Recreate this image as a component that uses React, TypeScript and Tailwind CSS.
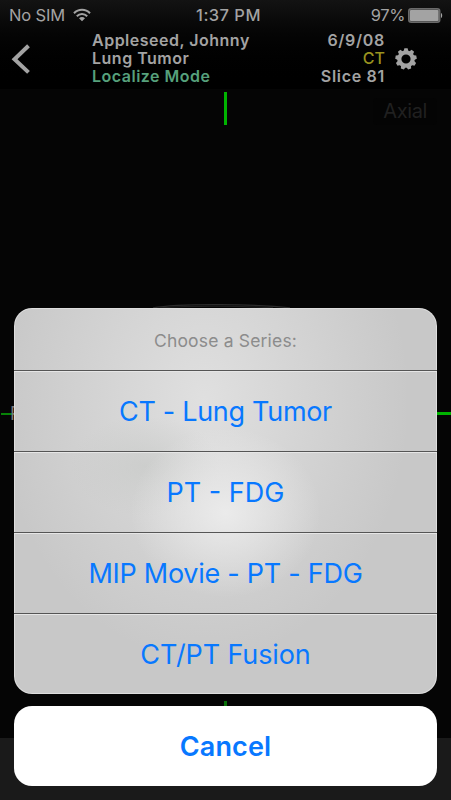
import { cva } from "class-variance-authority";

const SERIES = [
    { label: "CT - Lung Tumor", className: "tracking-[-0.3px]" },
    { label: "PT - FDG", className: "tracking-[0px]" },
    { label: "MIP Movie - PT - FDG", className: "tracking-[-0.26px]" },
    { label: "CT/PT Fusion", className: "tracking-[-0.12px]" },
];

const TEETH = [0, 40, 80, 120, 160, 200, 240, 280, 320];

const sheetButton = cva("flex w-full items-center justify-center text-[#0878ff]", {
    variants: {
        kind: {
            option: "h-[81px] border-t border-[#555] pt-[2px] text-[27px] shadow-[inset_0_1px_0_#e6e6e6]",
            cancel: "h-20 rounded-[18px] bg-white pt-[2px] text-[27px] font-semibold tracking-[0.1px]",
        },
    },
});

function WifiIcon() {
    return (
        <svg className="h-[14px] w-[18px]" viewBox="0 0 18 14" fill="none" stroke="#a3a3a3" strokeWidth="2">
            <path d="M1 5.2C5.4.6 12.6.6 17 5.2" />
            <path d="M3.8 8.2c2.9-3 7.5-3 10.4 0" />
            <path d="M9 13.2 6 10.2c1.7-1.6 4.3-1.6 6 0Z" fill="#a3a3a3" stroke="none" />
        </svg>
    );
}

function BatteryIcon() {
    return (
        <svg className="h-[15px] w-[35px]" viewBox="0 0 35 15">
            <rect x="0.75" y="0.75" width="31" height="13.5" rx="2.5" fill="#444" stroke="#6a6a6a" strokeWidth="1.5" />
            <rect x="2" y="2" width="28.5" height="11" rx="1" fill="#a3a3a3" />
            <path d="M33 5c1.6.5 1.6 4.5 0 5Z" fill="#a6a6a6" />
        </svg>
    );
}

function GearIcon() {
    return (
        <svg className="h-[22px] w-[22px]" viewBox="-11 -11 22 22">
            <circle r="6.7" fill="none" stroke="#a3a3a3" strokeWidth="4.2" />
            {TEETH.map((angle) => (
                <path key={angle} d="M-2.4-7.8-1.6-10.7H1.6L2.4-7.8Z" fill="#a3a3a3" transform={`rotate(${angle})`} />
            ))}
        </svg>
    );
}

function StatusBar() {
    return (
        <div className="grid h-[30px] grid-cols-[1fr_auto_1fr] items-center pr-[8px] pl-[9px] text-[16.5px]">
            <div className="flex items-center gap-[8px]">
                <span className="tracking-[-0.15px]">No SIM</span>
                <WifiIcon />
            </div>
            <span className="pl-[5px] font-medium tracking-[0.45px]">1:37 PM</span>
            <div className="flex items-center justify-end gap-[3px]">
                <span className="tracking-[-0.4px]">97%</span>
                <BatteryIcon />
            </div>
        </div>
    );
}

function StudyHeader() {
    return (
        <div className="flex h-[59px] items-start text-[16px] leading-[18px] font-semibold">
            <svg className="mt-[14px] ml-[11px] h-[31px] w-5" viewBox="0 0 20 31" fill="none" stroke="#a3a3a3" strokeWidth="4">
                <path d="M17.5 1.8 3.5 15.2l14 13.2" />
            </svg>
            <div className="mt-[1px] ml-[61px] flex-1 tracking-[0.5px]">
                <p>Appleseed, Johnny</p>
                <p>Lung Tumor</p>
                <p className="text-[#56a07c]">Localize Mode</p>
            </div>
            <div className="mt-[1px] text-right tracking-[0.7px]">
                <p>6/9/08</p>
                <p className="font-medium tracking-normal text-[#99931f]">CT</p>
                <p>Slice 81</p>
            </div>
            <div className="mt-[18px] mr-[34px] ml-[10px]">
                <GearIcon />
            </div>
        </div>
    );
}

function Viewer() {
    return (
        <div className="relative flex-1 bg-[#050505]">
            <div className="absolute top-[3px] left-[224px] h-[33px] w-[3px] bg-[#00b400]" />
            <div className="absolute top-[9px] right-[14px] rounded bg-[#040404] px-[10px] text-[20px] leading-[27px] tracking-[-0.4px] text-[#202020]">Axial</div>
            <svg className="absolute top-[212px] left-[145px] h-3 w-[155px]" viewBox="0 0 155 12" fill="none" stroke="#2c2c2c" strokeWidth="1.3">
                <path d="M8 7C34 2 115 3 145 7" />
                <path d="M15 7C45 4.5 92 4.5 128 7" stroke="#202020" />
            </svg>
            <div className="absolute top-[324px] left-[1px] h-[2px] w-[13px] bg-[#078307]" />
            <span className="absolute top-[315px] left-[10px] text-[18px] leading-[20px] text-[#777]">R</span>
            <div className="absolute top-[323px] right-0 h-[3px] w-[14px] bg-[#00b400]" />
            <div className="absolute top-[612px] left-[224px] h-[6px] w-[3px] bg-[#087008]" />
        </div>
    );
}

function SeriesSheet() {
    return (
        <div className="absolute inset-x-[14px] bottom-[14px] space-y-3">
            <div className="h-[386px] overflow-hidden rounded-[18px] bg-[#c8c8c8] bg-[radial-gradient(ellipse_95px_85px_at_50%_53%,rgba(236,236,236,0.95),transparent),radial-gradient(ellipse_75px_50px_at_31%_41%,rgba(198,200,198,0.6),transparent),radial-gradient(ellipse_205px_260px_at_45%_24%,rgba(225,225,225,0.95),transparent)] shadow-[inset_0_0_0_1px_#dedede]">
                <div className="flex h-[62px] items-center justify-center pt-[4px] text-[17.5px] tracking-[0.18px] text-[#8c8c8c]">
                    Choose a Series:
                </div>
                {SERIES.map((series) => (
                    <button key={series.label} className={sheetButton({ kind: "option", className: series.className })}>
                        {series.label}
                    </button>
                ))}
            </div>
            <button className={sheetButton({ kind: "cancel" })}>Cancel</button>
        </div>
    );
}

export default function App() {
    return (
        <div className="relative flex h-[800px] w-[451px] flex-col overflow-hidden bg-[#050505] font-['Inter',sans-serif] text-[#a3a3a3]">
            <div className="bg-linear-to-b from-[#131313] to-black">
                <StatusBar />
                <StudyHeader />
            </div>
            <Viewer />
            <div className="h-[62px] bg-[#1a1a1a]" />
            <SeriesSheet />
        </div>
    );
}
